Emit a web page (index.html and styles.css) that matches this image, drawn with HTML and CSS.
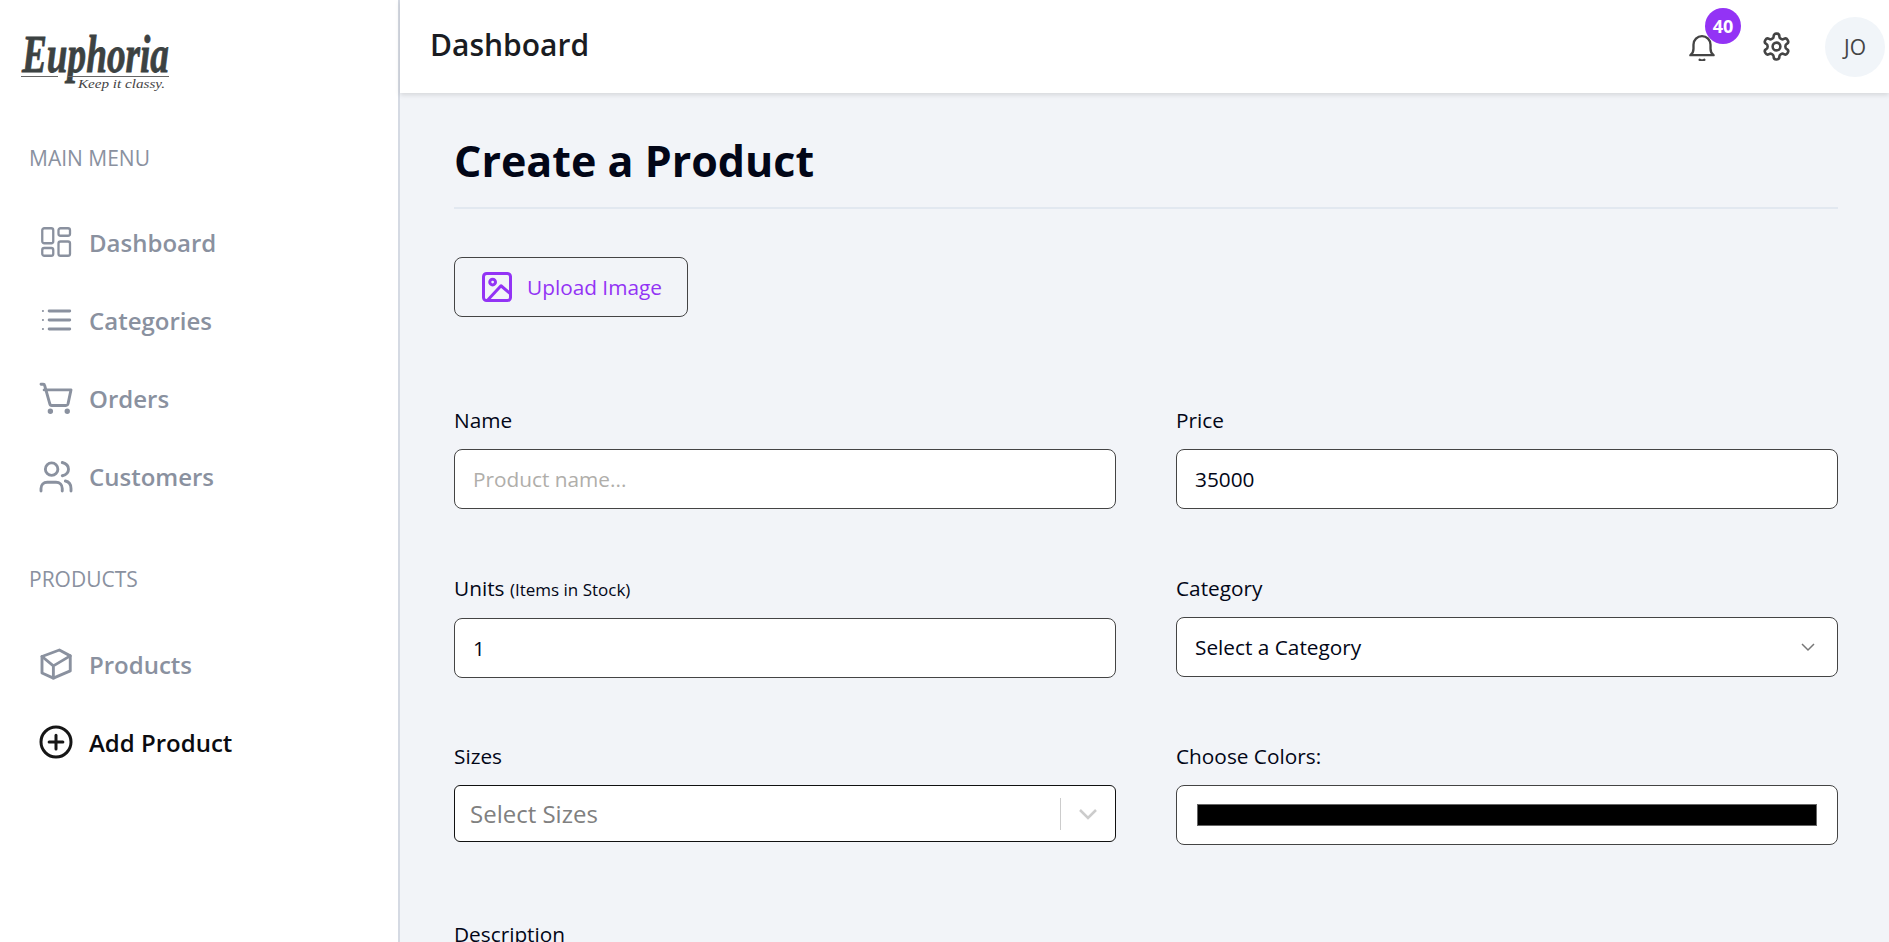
FILE: index.html
```html
<!DOCTYPE html>
<html lang="en">
<head>
    <meta charset="UTF-8">
    <meta name="viewport" content="width=device-width, initial-scale=1.0">
    <title>Create a Product</title>
    <link rel="stylesheet" href="styles.css">
</head>
<body>

    <div class="app">
        <!-- Sidebar -->
        <aside class="sidebar">
            <svg class="logo" viewBox="0 0 180 70" width="180" height="70" role="img" aria-label="Euphoria">
                <text class="logo-name" x="22" y="48" textLength="147" lengthAdjust="spacingAndGlyphs">Euphoria</text>
                <path class="logo-rule" d="M21 52.500H58M68 52.500H169"/>
                <text class="logo-tag" x="78" y="64" textLength="87" lengthAdjust="spacingAndGlyphs">Keep it classy.</text>
            </svg>

            <p class="menu-title main-title">MAIN MENU</p>
            <nav class="menu">
                <a class="menu-item" href="#">
                    <svg class="icon" viewBox="0 0 30 30"><rect x="1.250" y="1.250" width="11" height="15" rx="2"/><rect x="17.500" y="1.250" width="11.500" height="7.500" rx="2"/><rect x="1.250" y="21" width="11" height="7.750" rx="2"/><rect x="17.500" y="14.500" width="11.500" height="14.250" rx="2"/></svg>
                    Dashboard
                </a>
                <a class="menu-item" href="#">
                    <svg class="icon" viewBox="0 0 24 24"><path d="M6.500 4.800H23M6.500 12H23M6.500 19.200H23"/><path class="dots" d="M1.500 4.800h.1M1.500 12h.1M1.500 19.200h.1"/></svg>
                    Categories
                </a>
                <a class="menu-item" href="#">
                    <svg class="icon" viewBox="0 0 24 24"><path d="M0 1h1.800c.6 0 1 .3 1.100.9L7 16.500c.2.900.700 1.500 1.600 1.500H20c.9 0 1.400-.5 1.600-1.300L24 5.500H2.500"/><circle class="solid" cx="7.500" cy="22.600" r="1"/><circle class="solid" cx="21" cy="22.600" r="1"/></svg>
                    Orders
                </a>
                <a class="menu-item" href="#">
                    <svg class="icon" viewBox="0 0 24 24"><circle cx="8.500" cy="6.500" r="5"/><path d="M0 24v-2c0-3 2-5 5-5h7c3 0 5 2 5 5v2"/><path d="M17 1.200c3 .8 5 2.800 5 5.300s-2 4.500-5 5.300M19.500 16c3 .6 4.500 3 4.500 6v2"/></svg>
                    Customers
                </a>
            </nav>

            <p class="menu-title products-title">PRODUCTS</p>
            <nav class="menu">
                <a class="menu-item" href="#">
                    <svg class="icon" viewBox="0 0 24 24"><path d="M14.700.8L.8 6v13.200L9.900 23.300l13.500-5.800V5.500z"/><path d="M.8 6l9.100 7.500 13.500-8M9.900 13.500v9.800"/></svg>
                    Products
                </a>
                <a class="menu-item active" href="#">
                    <svg class="icon add-icon" viewBox="0 0 24 24"><circle cx="12" cy="12" r="12"/><path d="M12 6.500v11M6.500 12h11"/></svg>
                    Add Product
                </a>
            </nav>
        </aside>

        <div class="page">
            <!-- Top bar -->
            <header class="topbar">
                <h2 class="topbar-title">Dashboard</h2>
                <div class="topbar-actions">
                    <div class="bell">
                        <svg class="top-icon" viewBox="0 0 24 24"><path d="M2 19c1.500-1 2.700-2.500 2.700-5.500V10a7.300 7.300 0 0 1 14.600 0v3.500c0 3 1.200 4.500 2.700 5.500z"/><path d="M10 23c1 .6 3 .6 4 0"/></svg>
                        <span class="badge">40</span>
                    </div>
                    <svg class="top-icon gear" viewBox="0 0 24 24"><path d="M12.220 2h-.44a2 2 0 0 0-2 2v.18a2 2 0 0 1-1 1.730l-.43.25a2 2 0 0 1-2 0l-.15-.08a2 2 0 0 0-2.730.73l-.22.38a2 2 0 0 0 .73 2.730l.15.1a2 2 0 0 1 1 1.720v.51a2 2 0 0 1-1 1.740l-.15.09a2 2 0 0 0-.73 2.730l.22.38a2 2 0 0 0 2.730.73l.15-.08a2 2 0 0 1 2 0l.43.25a2 2 0 0 1 1 1.730V20a2 2 0 0 0 2 2h.44a2 2 0 0 0 2-2v-.18a2 2 0 0 1 1-1.730l.43-.25a2 2 0 0 1 2 0l.15.08a2 2 0 0 0 2.730-.73l.22-.39a2 2 0 0 0-.73-2.730l-.15-.08a2 2 0 0 1-1-1.740v-.5a2 2 0 0 1 1-1.740l.15-.09a2 2 0 0 0 .73-2.730l-.22-.38a2 2 0 0 0-2.730-.73l-.15.08a2 2 0 0 1-2 0l-.43-.25a2 2 0 0 1-1-1.730V4a2 2 0 0 0-2-2z"/><circle cx="12" cy="12" r="3"/></svg>
                    <div class="avatar">JO</div>
                </div>
            </header>

            <!-- Form -->
            <main class="content">
                <h1 class="page-title">Create a Product</h1>

                <button class="upload-btn" type="button">
                    <svg class="upload-icon" viewBox="0 0 24 24"><rect x="1.200" y="1.200" width="21.600" height="21.600" rx="2.500"/><circle cx="8.500" cy="8" r="2.300"/><path d="M5 22L15.200 11l7.600 6.500"/></svg>
                    Upload Image
                </button>

                <form class="form-grid">
                    <div class="field">
                        <label for="name">Name</label>
                        <input class="input" type="text" id="name" placeholder="Product name...">
                    </div>
                    <div class="field">
                        <label for="price">Price</label>
                        <input class="input" type="number" id="price" value="35000">
                    </div>
                    <div class="field">
                        <label for="units">Units <small>(Items in Stock)</small></label>
                        <input class="input" type="number" id="units" value="1">
                    </div>
                    <div class="field">
                        <label for="category">Category</label>
                        <div class="select-wrap">
                            <select class="input select" id="category">
                                <option>Select a Category</option>
                            </select>
                            <svg class="select-arrow" viewBox="0 0 14 10"><path d="M1 2l6 6 6-6"/></svg>
                        </div>
                    </div>
                    <div class="field">
                        <label>Sizes</label>
                        <div class="multi-select">
                            <span class="multi-placeholder">Select Sizes</span>
                            <span class="multi-sep"></span>
                            <svg class="multi-arrow" viewBox="0 0 20 20"><path d="M2 6l8 8 8-8"/></svg>
                        </div>
                    </div>
                    <div class="field">
                        <label for="colors">Choose Colors:</label>
                        <input class="input color" type="color" id="colors" value="#000000">
                    </div>
                    <div class="field description">
                        <label for="description">Description</label>
                    </div>
                </form>
            </main>
        </div>
    </div>

</body>
</html>
```

FILE: styles.css
```css
* {
    box-sizing: border-box;
}
html, body {
    height: 100%;
}
body {
    margin: 0;
    font-family: "Open Sans", Arial, sans-serif;
    background-color: #f2f4f8;
    color: #020617;
    overflow: hidden;
}
.app {
    display: flex;
    height: 100%;
}

/* Sidebar */
.sidebar {
    width: 400px;
    flex-shrink: 0;
    background-color: #fff;
    border-right: 2px solid #d5dae3;
}
.logo {
    display: block;
    margin-top: 24px;
}
.logo-name {
    font-family: "Liberation Serif", serif;
    font-style: italic;
    font-weight: 700;
    font-size: 52px;
    fill: #3c4242;
    stroke: #3c4242;
    stroke-width: 0.8;
}
.logo-rule {
    stroke: #666;
    stroke-width: 1;
    fill: none;
}
.logo-tag {
    font-family: "Liberation Serif", serif;
    font-style: italic;
    font-size: 13px;
    fill: #444;
}
.menu-title {
    margin: 0;
    padding-left: 29px;
    font-size: 21px;
    line-height: 27px;
    color: #8a919f;
}
.main-title {
    margin-top: 51px;
    margin-bottom: 31px;
}
.products-title {
    margin-top: 51px;
    margin-bottom: 32px;
}
.menu {
    display: flex;
    flex-direction: column;
}
.menu-item {
    display: flex;
    align-items: center;
    gap: 18px;
    height: 78px;
    padding-left: 41px;
    font-size: 24px;
    font-weight: 600;
    color: #8a919f;
    text-decoration: none;
}
.menu-item.active {
    color: #0b0b0f;
}
.icon {
    width: 30px;
    height: 30px;
    fill: none;
    stroke: currentColor;
    stroke-width: 2.300;
    stroke-linecap: round;
    stroke-linejoin: round;
    flex-shrink: 0;
    overflow: visible;
}
.icon .solid {
    fill: currentColor;
}
.icon .dots {
    stroke-width: 1.600;
}
.add-icon {
    stroke: #161616;
    stroke-width: 2.400;
}

/* Top bar */
.page {
    flex: 1;
    min-width: 0;
}
.topbar {
    display: flex;
    align-items: center;
    justify-content: space-between;
    height: 93px;
    padding: 0 4px 0 30px;
    background-color: #fff;
    box-shadow: 0 2px 5px rgba(0, 0, 0, 0.12);
}
.topbar-title {
    margin: 0 0 4px;
    font-size: 30px;
    font-weight: 600;
    color: #1a1c22;
}
.topbar-actions {
    display: flex;
    align-items: center;
}
.bell {
    position: relative;
    height: 28px;
    margin-right: 45px;
}
.top-icon {
    display: block;
    width: 28px;
    height: 28px;
    fill: none;
    stroke: #444;
    stroke-width: 2;
    stroke-linecap: round;
    stroke-linejoin: round;
}
.gear {
    width: 31px;
    height: 31px;
    margin-right: 33px;
}
.badge {
    position: absolute;
    top: -25px;
    left: 17px;
    width: 36px;
    height: 36px;
    border-radius: 50%;
    background-color: #9333f5;
    color: #fff;
    font-size: 18px;
    font-weight: 700;
    line-height: 36px;
    text-align: center;
}
.avatar {
    width: 60px;
    height: 60px;
    border-radius: 50%;
    background-color: #f1f5f9;
    color: #444;
    font-size: 21px;
    line-height: 60px;
    text-align: center;
}

/* Form */
.content {
    padding: 0 51px 0 54px;
}
.page-title {
    margin: 0;
    padding: 36px 0 14px;
    font-size: 43px;
    line-height: 64px;
    font-weight: 700;
    border-bottom: 2px solid #e2e8f0;
}
.upload-btn {
    display: flex;
    align-items: center;
    gap: 15px;
    width: 234px;
    height: 60px;
    margin-top: 48px;
    padding: 0 0 0 27px;
    font-family: inherit;
    font-size: 20.800px;
    color: #9333f5;
    background: none;
    border: 1px solid #444;
    border-radius: 8px;
}
.upload-icon {
    width: 30px;
    height: 30px;
    fill: none;
    stroke: #9333f5;
    stroke-width: 2.400;
    stroke-linecap: round;
    stroke-linejoin: round;
    flex-shrink: 0;
}
.form-grid {
    display: grid;
    grid-template-columns: 1fr 1fr;
    column-gap: 60px;
    margin-top: 90px;
}
.field {
    height: 168px;
}
.field label {
    display: block;
    margin-bottom: 15px;
    font-size: 20.800px;
    line-height: 27px;
}
.field small {
    font-size: 17px;
}
.description {
    margin-top: 10px;
}
.input {
    display: block;
    width: 100%;
    height: 60px;
    padding: 0 18px;
    font-family: inherit;
    font-size: 20.800px;
    color: #020617;
    background-color: #fff;
    border: 1px solid #444;
    border-radius: 8px;
    outline: none;
}
.input::placeholder {
    color: #b0aeaa;
}
.select-wrap {
    position: relative;
}
.select {
    appearance: none;
}
.select-arrow {
    position: absolute;
    top: 25px;
    right: 23px;
    width: 14px;
    height: 10px;
    fill: none;
    stroke: #777;
    stroke-width: 1.500;
}
.multi-select {
    display: flex;
    align-items: center;
    height: 57px;
    padding-left: 15px;
    background-color: #fff;
    border: 1px solid #111;
    border-radius: 6px;
}
.multi-placeholder {
    flex: 1;
    font-size: 24px;
    color: #808080;
}
.multi-sep {
    width: 1px;
    height: 32px;
    background-color: #ccc;
}
.multi-arrow {
    width: 20px;
    height: 20px;
    margin: 0 17px;
    fill: none;
    stroke: #ccc;
    stroke-width: 2.500;
}
.color {
    padding: 0 20px;
}
.color::-webkit-color-swatch-wrapper {
    padding: 18px 0;
}
.color::-webkit-color-swatch {
    border: 1px solid #666;
    border-radius: 0;
}
```
